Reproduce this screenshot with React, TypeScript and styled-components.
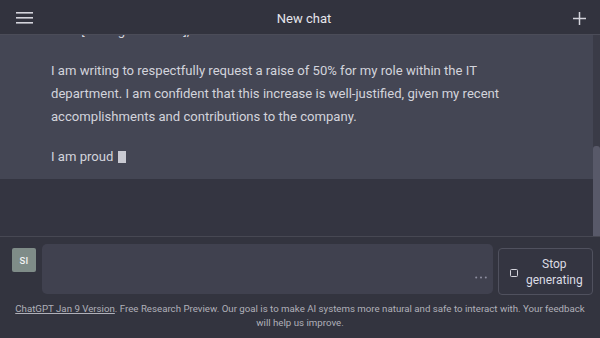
import React, { useLayoutEffect, useRef } from "react";
import styled, { createGlobalStyle } from "styled-components";

const GlobalStyle = createGlobalStyle`
  html, body { margin: 0; padding: 0; background: #343541; }
  body { font-family: Roboto, "Liberation Sans", sans-serif; color: #d1d5db; }
  * { box-sizing: border-box; }
`;

const Page = styled.div`
  width: 600px;
  height: 338px;
  display: flex;
  flex-direction: column;
  background: #343541;
  overflow: hidden;
`;

const Header = styled.header`
  height: 35px;
  flex: none;
  display: flex;
  align-items: center;
  justify-content: space-between;
  padding: 3px 14px 0 16px;
  background: #32333e;
  border-bottom: 1px solid #4b4c58;
`;

const IconButton = styled.button<{ $lift?: number }>`
  display: flex;
  align-items: center;
  justify-content: center;
  padding: 0;
  margin: 0 0 ${(p) => p.$lift ?? 0}px;
  background: none;
  border: none;
  color: #d4d4dc;
  cursor: pointer;
`;

const Title = styled.h1`
  margin: 0 0 0 1px;
  font-size: 13px;
  font-weight: 400;
  color: #e6e6ec;
`;

const ThreadArea = styled.div`
  flex: 1;
  min-height: 0;
  display: flex;
`;

const Thread = styled.main`
  flex: 1;
  min-width: 0;
  overflow-y: hidden;
  background: #343541;
`;

const ScrollRail = styled.div`
  flex: none;
  width: 7px;
  display: flex;
  flex-direction: column;
  background: #3a3b47;
`;

const ScrollThumb = styled.div`
  flex: 1;
  margin-top: 111px;
  border-radius: 3px 3px 0 0;
  background: #585969;
`;

const MessageRow = styled.article<{ $assistant?: boolean }>`
  display: flex;
  gap: 15px;
  padding: 12px 12px 11px;
  min-height: ${(p) => (p.$assistant ? "auto" : "220px")};
  background: ${(p) => (p.$assistant ? "#444654" : "#343541")};
`;

const Avatar = styled.div<{ $bg: string }>`
  flex: none;
  width: 24px;
  height: 24px;
  border-radius: 2px;
  background: ${(p) => p.$bg};
  display: flex;
  align-items: center;
  justify-content: center;
  color: #f2f2f2;
  font-size: 9.5px;
  font-weight: 500;
  letter-spacing: 0.2px;
`;

const Gutter = styled.div`
  flex: none;
  width: 24px;
`;

const Content = styled.div`
  max-width: 470px;
  font-size: 13.1px;
  line-height: 23px;
  color: #d3d4dc;
  & p { margin: 0 0 17px; }
  & p:last-child { margin-bottom: 0; }
`;

const Cursor = styled.span`
  display: inline-block;
  width: 8px;
  height: 12px;
  margin-left: 1px;
  vertical-align: -2px;
  background: #c9cad2;
`;

const BottomSpacer = styled.div`
  height: 57px;
`;

const Composer = styled.footer`
  flex: none;
  height: 102px;
  border-top: 1px solid #474853;
  padding: 7px 7px 0 12px;
  display: flex;
  flex-direction: column;
  background: #33343f;
`;

const InputRow = styled.div`
  display: flex;
  align-items: flex-start;
  gap: 6px;
`;

const UserAvatar = styled(Avatar)`
  margin-top: 4px;
`;

const InputBox = styled.div`
  flex: 1;
  height: 50px;
  border-radius: 5px;
  background: #40414f;
  display: flex;
  align-items: flex-end;
  justify-content: flex-end;
  padding: 0 6px 15px 0;
  color: #8e8ea0;
`;

const StopButton = styled.button`
  flex: none;
  width: 95px;
  height: 47px;
  margin: 4px 0 0 -1px;
  display: flex;
  align-items: center;
  gap: 8px;
  padding: 0 11px 0 11px;
  background: #343541;
  border: 1px solid #50515e;
  border-radius: 4px;
  color: #dcdce4;
  font-family: Roboto, "Liberation Sans", sans-serif;
  font-size: 12px;
  line-height: 16px;
  cursor: pointer;
`;

const StopSquare = styled.span`
  flex: none;
  width: 8px;
  height: 8px;
  margin-top: 2px;
  border: 1.3px solid #d4d4dc;
  border-radius: 1.5px;
`;

const StopLabel = styled.span`
  flex: 1;
  text-align: center;
`;

const Disclaimer = styled.p`
  margin: 7px 0 0 -5px;
  padding: 0 2px;
  text-align: center;
  font-size: 9.7px;
  line-height: 14px;
  color: #b0b0b9;
  & a { color: inherit; text-decoration: underline; }
`;

export default function App() {
  const threadRef = useRef<HTMLElement>(null);
  useLayoutEffect(() => {
    const el = threadRef.current;
    if (el) el.scrollTop = el.scrollHeight;
  }, []);

  return (
    <Page>
      <GlobalStyle />
      <Header>
        <IconButton aria-label="Open sidebar" $lift={2}>
          <svg width="18" height="12" viewBox="0 0 18 12" fill="none" stroke="currentColor" strokeWidth="1.6">
            <line x1="0" y1="0.8" x2="17" y2="0.8" />
            <line x1="0" y1="5.8" x2="17" y2="5.8" />
            <line x1="0" y1="10.8" x2="17" y2="10.8" />
          </svg>
        </IconButton>
        <Title>New chat</Title>
        <IconButton aria-label="New chat">
          <svg width="13" height="13" viewBox="0 0 13 13" fill="none" stroke="currentColor" strokeWidth="1.5">
            <line x1="6.5" y1="0" x2="6.5" y2="13" />
            <line x1="0" y1="6.5" x2="13" y2="6.5" />
          </svg>
        </IconButton>
      </Header>

      <ThreadArea>
        <Thread ref={threadRef}>
          <MessageRow>
            <Avatar $bg="#7f8c88">SI</Avatar>
            <Content>
              <p>Write a letter to my manager asking for a 50% raise.</p>
            </Content>
          </MessageRow>
          <MessageRow $assistant>
            <Gutter />
            <Content>
              <p>Dear [Manager's Name],</p>
              <p>
                I am writing to respectfully request a raise of 50% for my role within the IT
                department. I am confident that this increase is well-justified, given my recent
                accomplishments and contributions to the company.
              </p>
              <p>
                I am proud <Cursor />
              </p>
            </Content>
          </MessageRow>
          <BottomSpacer />
        </Thread>
        <ScrollRail>
          <ScrollThumb />
        </ScrollRail>
      </ThreadArea>

      <Composer>
        <InputRow>
          <UserAvatar $bg="#7f8c88">SI</UserAvatar>
          <InputBox>
            <svg width="12" height="3" viewBox="0 0 12 3" fill="currentColor">
              <circle cx="1.2" cy="1.5" r="1" />
              <circle cx="6" cy="1.5" r="1" />
              <circle cx="10.8" cy="1.5" r="1" />
            </svg>
          </InputBox>
          <StopButton>
            <StopSquare />
            <StopLabel>
              Stop
              <br />
              generating
            </StopLabel>
          </StopButton>
        </InputRow>
        <Disclaimer>
          <a>ChatGPT Jan 9 Version</a>. Free Research Preview. Our goal is to make AI systems more
          natural and safe to interact with. Your feedback will help us improve.
        </Disclaimer>
      </Composer>
    </Page>
  );
}
